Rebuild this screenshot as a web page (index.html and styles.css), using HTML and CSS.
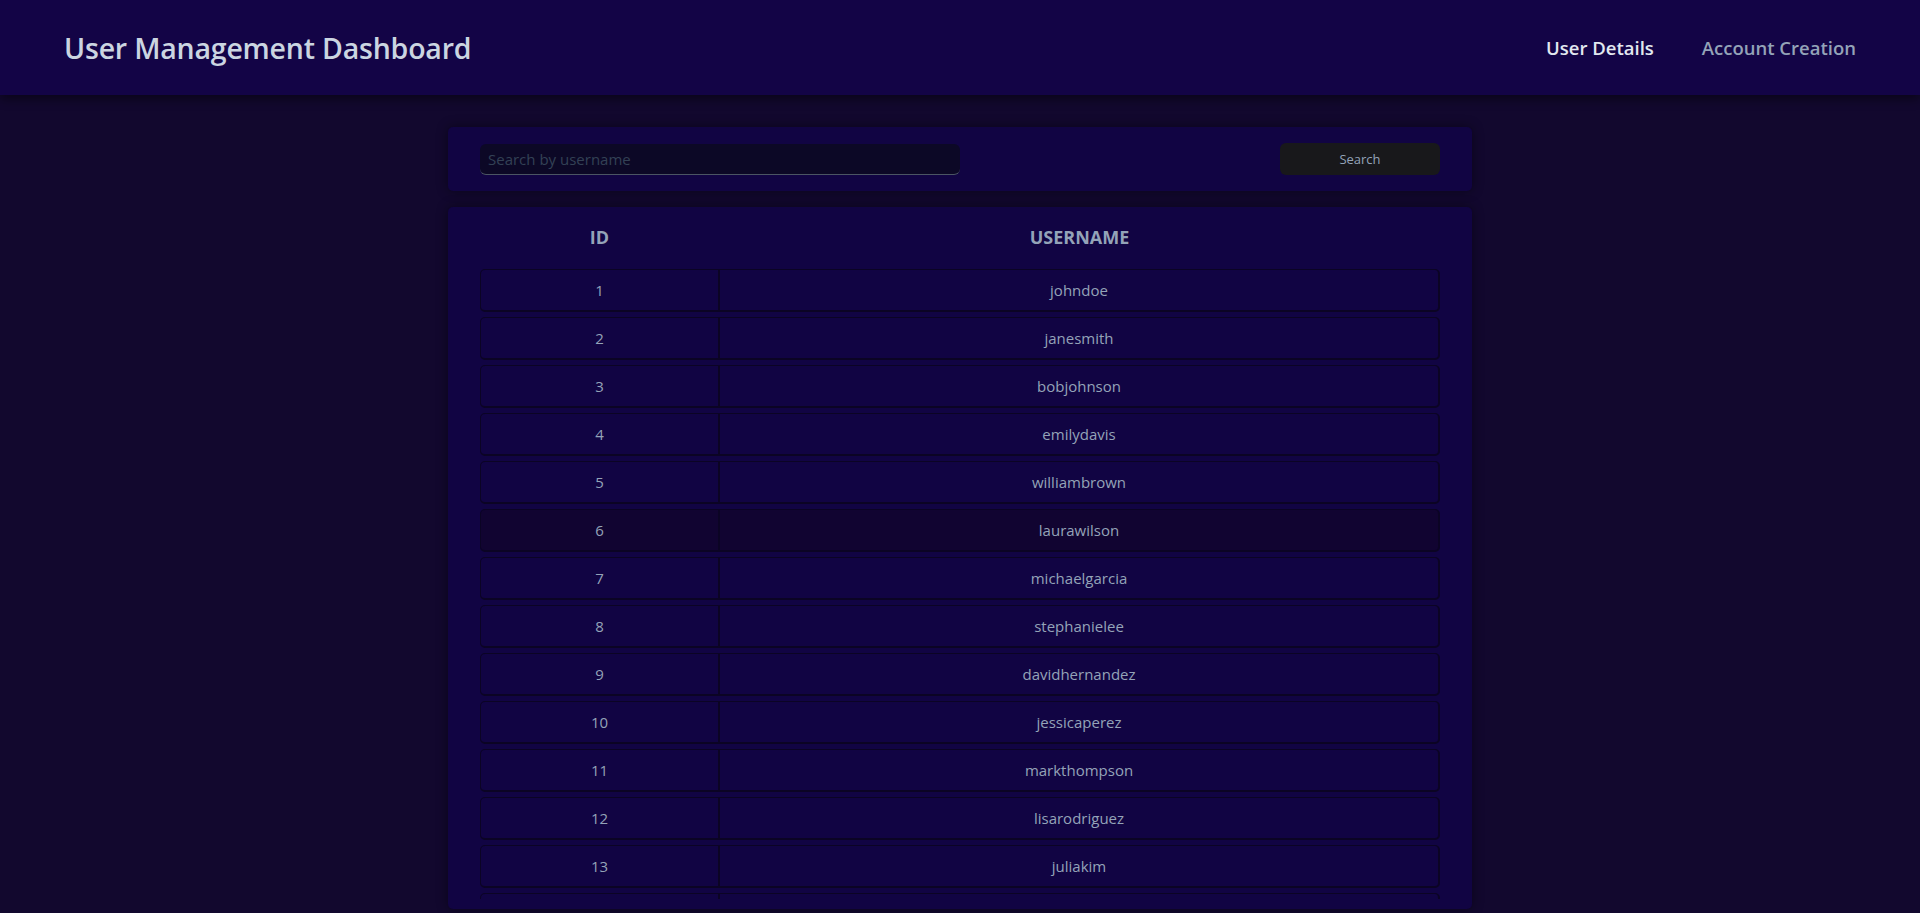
FILE: index.html
```html
<!DOCTYPE html>
<html lang="en">
<head>
<meta charset="utf-8">
<title>User Management Dashboard</title>
<link rel="stylesheet" href="styles.css">
</head>
<body>
<header class="topbar">
  <h1 class="brand">User Management Dashboard</h1>
  <nav class="nav">
    <a class="nav-link active" href="#">User Details</a>
    <a class="nav-link" href="#">Account Creation</a>
  </nav>
</header>
<main class="main">
  <section class="card search-card">
    <input class="search-input" type="text" placeholder="Search by username">
    <button class="search-btn" type="button">Search</button>
  </section>
  <section class="card table-card">
    <div class="table-scroll">
      <table class="users">
        <thead>
          <tr><th class="col-id">ID</th><th class="col-name">USERNAME</th></tr>
        </thead>
        <tbody>
          <tr><td class="col-id">1</td><td class="col-name">johndoe</td></tr>
          <tr><td class="col-id">2</td><td class="col-name">janesmith</td></tr>
          <tr><td class="col-id">3</td><td class="col-name">bobjohnson</td></tr>
          <tr><td class="col-id">4</td><td class="col-name">emilydavis</td></tr>
          <tr><td class="col-id">5</td><td class="col-name">williambrown</td></tr>
          <tr class="hover"><td class="col-id">6</td><td class="col-name">laurawilson</td></tr>
          <tr><td class="col-id">7</td><td class="col-name">michaelgarcia</td></tr>
          <tr><td class="col-id">8</td><td class="col-name">stephanielee</td></tr>
          <tr><td class="col-id">9</td><td class="col-name">davidhernandez</td></tr>
          <tr><td class="col-id">10</td><td class="col-name">jessicaperez</td></tr>
          <tr><td class="col-id">11</td><td class="col-name">markthompson</td></tr>
          <tr><td class="col-id">12</td><td class="col-name">lisarodriguez</td></tr>
          <tr><td class="col-id">13</td><td class="col-name">juliakim</td></tr>
          <tr><td class="col-id"></td><td class="col-name"></td></tr>
        </tbody>
      </table>
    </div>
  </section>
</main>
</body>
</html>
```
FILE: styles.css
```css
* { box-sizing: border-box; }

html, body {
  margin: 0;
  padding: 0;
  height: 100%;
}

body {
  background: #12082e;
  font-family: "Open Sans", "Noto Sans", sans-serif;
  color: #94a3b8;
  overflow: hidden;
}

.topbar {
  height: 95px;
  background: #130446;
  display: flex;
  align-items: center;
  justify-content: space-between;
  padding: 0 64px;
  box-shadow: 0 4px 10px rgba(0, 0, 0, 0.45);
  position: relative;
  z-index: 1;
}

.brand {
  margin: 0;
  font-size: 28.5px;
  font-weight: 600;
  color: #cbd5e1;
  letter-spacing: -0.2px;
}

.nav {
  display: flex;
  gap: 48px;
}

.nav-link {
  text-decoration: none;
  font-size: 18.5px;
  font-weight: 600;
  color: #94a3b8;
}

.nav-link.active {
  color: #e2e8f0;
}

.main {
  width: 1024px;
  margin: 0 auto;
  padding-top: 32px;
  display: flex;
  flex-direction: column;
  gap: 16px;
}

.card {
  background: #110443;
  border-radius: 5px;
  box-shadow: 0 0 12px rgba(0, 0, 0, 0.45);
}

.search-card {
  height: 64px;
  display: flex;
  align-items: center;
  justify-content: space-between;
  padding: 0 32px;
}

.search-input {
  width: 480px;
  height: 31px;
  background: #0c0826;
  border: none;
  border-bottom: 1px solid #4b5563;
  border-radius: 6px;
  padding: 0 8px;
  font-family: inherit;
  font-size: 15px;
  color: #cbd5e1;
  outline: none;
}

.search-input::placeholder {
  color: #334155;
}

.search-btn {
  width: 160px;
  height: 32px;
  background: #18181b;
  border: none;
  border-radius: 6px;
  font-family: inherit;
  font-size: 13px;
  color: #94a3b8;
}

.table-card {
  height: 702px;
  padding: 3px 32px 10px;
}

.table-scroll {
  height: 100%;
  overflow: hidden;
}

.users {
  width: 100%;
  border-collapse: separate;
  border-spacing: 0 5px;
  margin-top: -5px;
  table-layout: fixed;
}

.users th {
  height: 54px;
  font-size: 18px;
  font-weight: 700;
  color: #94a3b8;
  text-align: center;
  vertical-align: middle;
  padding: 0;
}

.users .col-id { width: 239px; }

.users td {
  height: 43px;
  font-size: 15px;
  text-align: center;
  color: #94a3b8;
  background: #110443;
  border-top: 1px solid #0b0424;
  border-bottom: 2px solid #0b0424;
}

.users td.col-id {
  border-left: 1px solid #0b0424;
  border-right: 1px solid #0b0424;
  border-radius: 5px 0 0 5px;
}

.users td.col-name {
  border-left: 1px solid #0b0424;
  border-right: 2px solid #0b0424;
  border-radius: 0 5px 5px 0;
}

.users tr.hover td {
  background: #110431;
}
```
